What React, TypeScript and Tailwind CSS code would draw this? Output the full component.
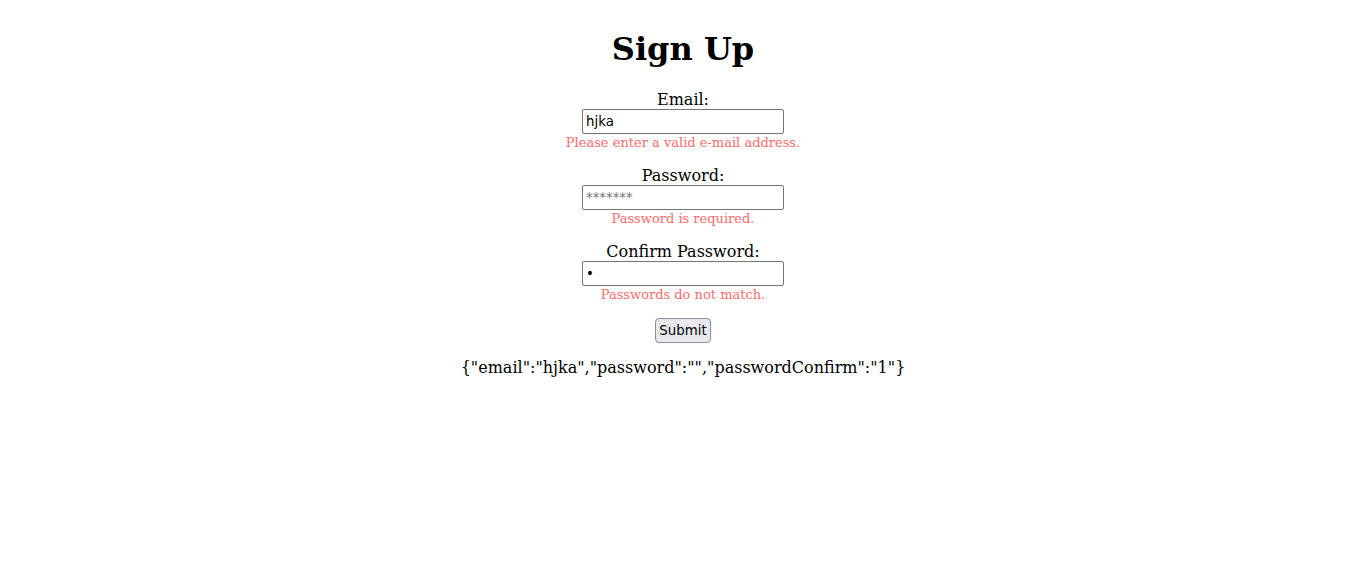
import React, { useState } from "react"

const Field = ({ label, type, value, placeholder, error }: { label: string; type: string; value: string; placeholder?: string; error: string }) => (
    <div className="flex flex-col items-center">
        <label className="text-[16px] leading-[18px]">{label}</label>
        <input
            type={type}
            defaultValue={value}
            placeholder={placeholder}
            className="w-[202px] h-[25px] border border-[#767676] rounded-[2px] px-[3px] py-[1px] bg-white text-[13.33px] font-['DejaVu_Sans',sans-serif] text-black placeholder:text-[#757575] outline-none"
        />
        <div className="pt-[1px] text-[13px] leading-[16px] text-[#ff6b6b]">{error}</div>
    </div>
)

export default function App() {
    const [form] = useState({ email: "hjka", password: "", passwordConfirm: "1" })

    return (
        <div className="min-h-[587px] bg-white text-black font-['DejaVu_Serif',serif] flex flex-col items-center pt-[31px]">
            <h1 className="text-[32px] font-bold leading-[37px] mb-[23px]">Sign Up</h1>
            <form className="flex flex-col items-center gap-[16px]" onSubmit={e => e.preventDefault()}>
                <Field label="Email:" type="text" value={form.email} error="Please enter a valid e-mail address." />
                <Field label="Password:" type="password" value={form.password} placeholder="*******" error="Password is required." />
                <Field label="Confirm Password:" type="password" value={form.passwordConfirm} error="Passwords do not match." />
                <button
                    type="submit"
                    className="-mt-[1px] w-[56px] h-[25px] flex items-center justify-center bg-[#e9e9ed] border border-[#8f8f9d] rounded-[4px] text-[13.33px] font-['DejaVu_Sans',sans-serif] text-black"
                >
                    Submit
                </button>
            </form>
            <p className="mt-[15px] text-[16px] leading-[19px]">{JSON.stringify(form)}</p>
        </div>
    )
}
